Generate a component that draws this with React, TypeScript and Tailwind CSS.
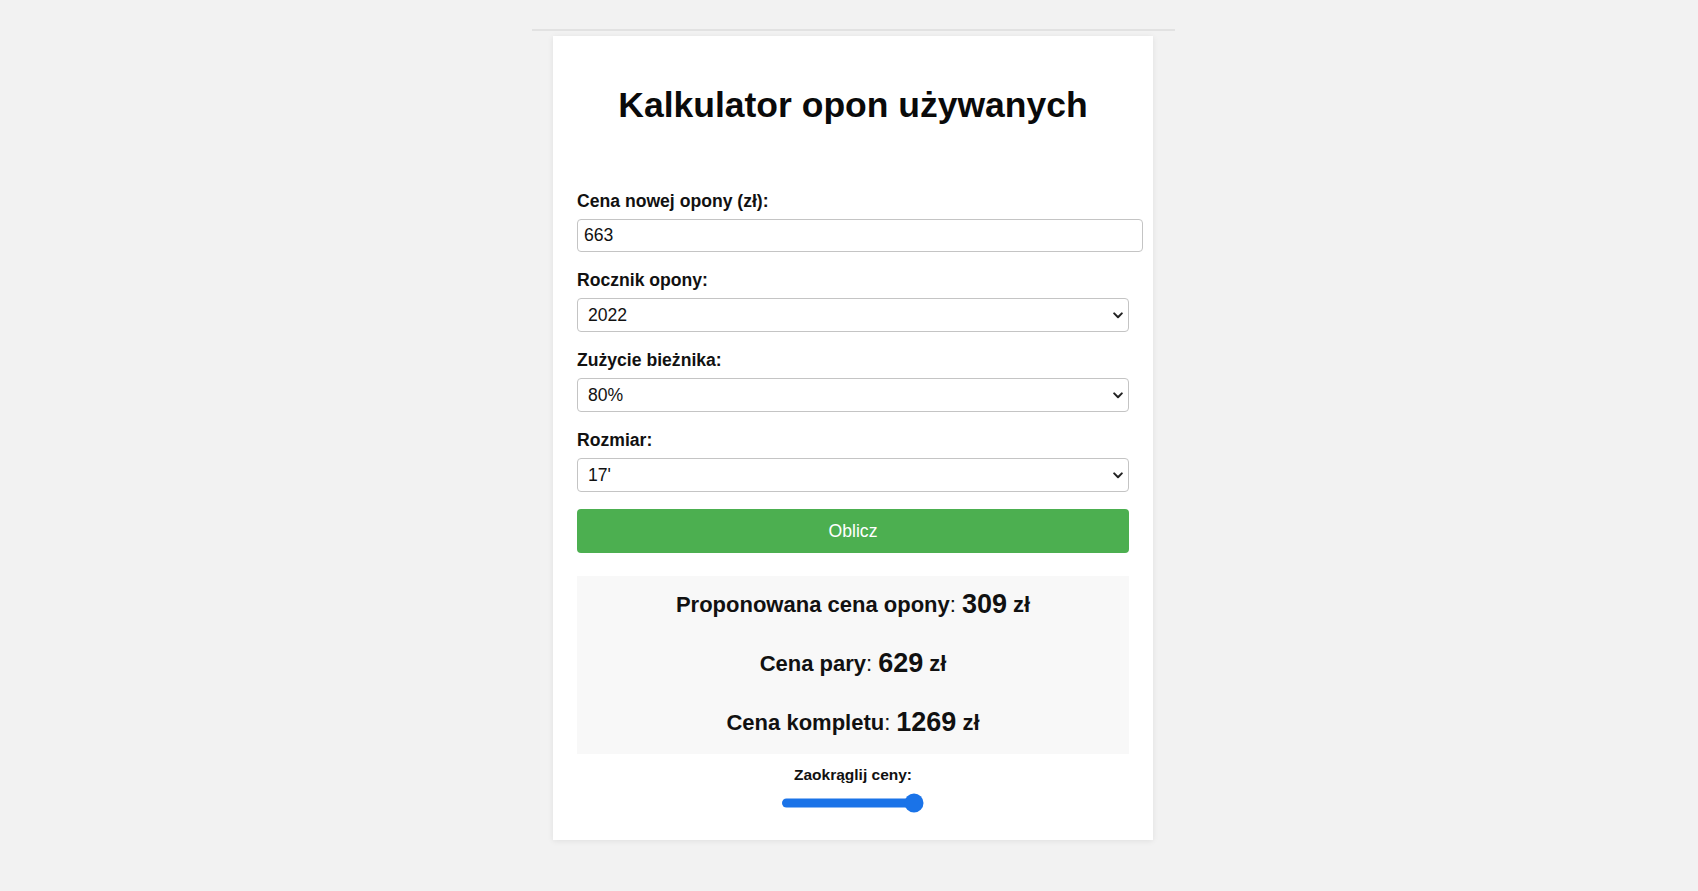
import React, { useState } from 'react';

const font = { fontFamily: '"Liberation Sans", Arial, sans-serif' };

const Chevron: React.FC = () => (
  <svg width="10" height="7" viewBox="0 0 10 7" className="shrink-0">
    <path d="M1.2 1.4 L5 5.2 L8.8 1.4" fill="none" stroke="#222" strokeWidth="2" strokeLinecap="round" strokeLinejoin="round" />
  </svg>
);

interface SelectFieldProps {
  label: string;
  value: string;
  options: string[];
  onChange: (v: string) => void;
}

const SelectField: React.FC<SelectFieldProps> = ({ label, value, options, onChange }) => (
  <div className="flex flex-col">
    <label className="text-[17.6px] leading-[20px] font-bold text-[#111] mb-[8px]">{label}</label>
    <div className="flex items-center h-[34px] w-full border border-[#c4c4c4] rounded-[4px] bg-white pr-[5px]">
      <select
        value={value}
        onChange={e => onChange(e.target.value)}
        className="flex-1 h-full appearance-none bg-transparent outline-none pl-[10px] text-[17.6px] text-[#111]"
        style={font}
      >
        {options.map(o => (
          <option key={o} value={o}>{o}</option>
        ))}
      </select>
      <Chevron />
    </div>
  </div>
);

const ResultRow: React.FC<{ label: string; value: string }> = ({ label, value }) => (
  <div className="h-[30px] flex items-center justify-center text-[#111]">
    <span className="text-[22px] font-bold">{label}</span>
    <span className="text-[22px]">:</span>
    <span className="text-[27px] font-bold ml-[6px]">{value}</span>
    <span className="text-[22px] font-bold ml-[6px]">zł</span>
  </div>
);

export default function App() {
  const [price, setPrice] = useState('663');
  const [year, setYear] = useState('2022');
  const [wear, setWear] = useState('80%');
  const [size, setSize] = useState("17'");

  return (
    <div className="min-h-[891px] bg-[#f2f2f2] flex flex-col items-center pt-[29px] pl-[8px]" style={font}>
      <div className="w-[643px] border-t-2 border-[#e2e2e2] flex justify-center">
        <div className="mt-[5px] w-[600px] bg-white shadow-[0_1px_6px_rgba(0,0,0,0.08)] px-[24px] pt-[49px] pb-[27px] flex flex-col">
          <h1 className="text-[35.5px] leading-[41px] font-bold text-center text-[#0a0a0a]">Kalkulator opon używanych</h1>

          <div className="mt-[65px] flex flex-col">
            <label className="text-[17.6px] leading-[20px] font-bold text-[#111] mb-[8px]">Cena nowej opony (zł):</label>
            <input
              value={price}
              onChange={e => setPrice(e.target.value)}
              className="w-[566px] h-[33px] border border-[#c4c4c4] rounded-[4px] px-[6px] text-[17.6px] text-[#111] outline-none"
              style={font}
            />
          </div>

          <div className="mt-[18px] flex flex-col gap-[18px]">
            <SelectField label="Rocznik opony:" value={year} onChange={setYear} options={['2024', '2023', '2022', '2021', '2020', '2019']} />
            <SelectField label="Zużycie bieżnika:" value={wear} onChange={setWear} options={['100%', '90%', '80%', '70%', '60%', '50%']} />
            <SelectField label="Rozmiar:" value={size} onChange={setSize} options={["15'", "16'", "17'", "18'", "19'"]} />
          </div>

          <button className="mt-[17px] h-[44px] w-full bg-[#4caf50] rounded-[4px] text-white text-[17.6px]" style={font}>
            Oblicz
          </button>

          <div className="mt-[23px] bg-[#f8f8f8] pt-[13px] pb-[17px] flex flex-col gap-[29px]">
            <ResultRow label="Proponowana cena opony" value="309" />
            <ResultRow label="Cena pary" value="629" />
            <ResultRow label="Cena kompletu" value="1269" />
          </div>

          <div className="mt-[12px] flex flex-col items-center">
            <span className="text-[15.5px] leading-[18px] font-bold text-[#111]">Zaokrąglij ceny:</span>
            <svg width="144" height="20" viewBox="0 0 144 20" className="mt-[9px]">
              <rect x="1" y="5.5" width="140" height="9" rx="4.5" fill="#1a73e8" />
              <circle cx="133" cy="10" r="9.5" fill="#1a73e8" />
            </svg>
          </div>
        </div>
      </div>
    </div>
  );
}
